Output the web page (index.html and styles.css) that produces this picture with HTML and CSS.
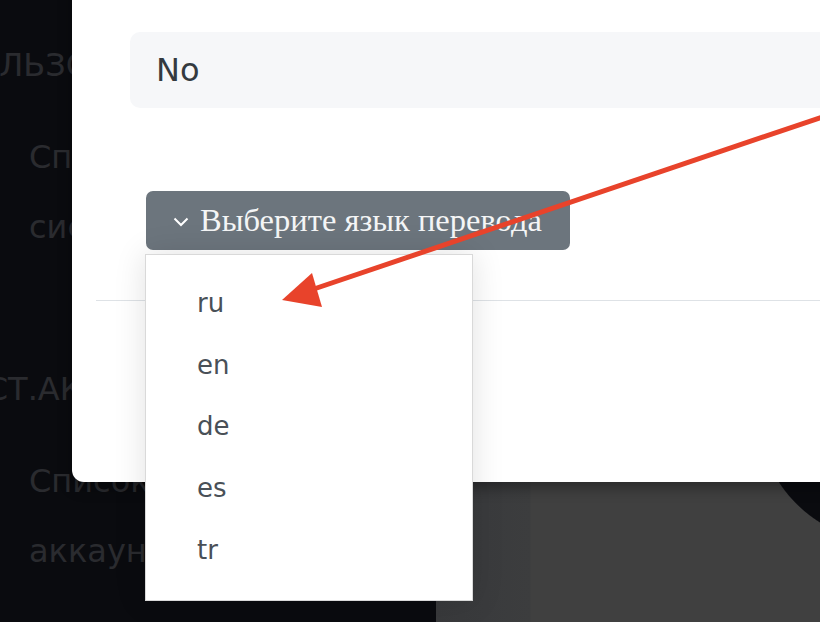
FILE: index.html
```html
<!DOCTYPE html>
<html lang="ru">

<head>
    <meta charset="UTF-8">
    <meta name="viewport" content="width=device-width, initial-scale=1.0">
    <title>Выбор языка перевода</title>
    <link rel="stylesheet" href="styles.css">
</head>

<body>
    <div class="layout">
        <!-- боковое меню под затемнением -->
        <aside class="sidebar">
            <div class="nav-title nav-title-users">Пользователи</div>
            <div class="nav-item">Список пользователей системы</div>
            <div class="nav-title nav-title-test">Тест.аккаунты</div>
            <div class="nav-item">Список тестовых аккаунтов</div>
        </aside>
        <main class="main"></main>
    </div>

    <!-- модальное окно -->
    <div class="modal">
        <div class="modal-body">
            <div class="field">No</div>
            <div class="translate">
                <button class="btn-translate" type="button">
                    <svg class="chevron" width="16" height="10" viewBox="0 0 16 10">
                        <polyline points="1.5,1.5 8,8 14.5,1.5" fill="none" stroke="#fff" stroke-width="2" />
                    </svg>
                    <span>Выберите язык перевода</span>
                </button>
                <ul class="dropdown">
                    <li class="dropdown-item">ru</li>
                    <li class="dropdown-item">en</li>
                    <li class="dropdown-item">de</li>
                    <li class="dropdown-item">es</li>
                    <li class="dropdown-item">tr</li>
                </ul>
            </div>
        </div>
        <div class="modal-footer"></div>
    </div>

    <!-- стрелка-указатель поверх скриншота -->
    <svg class="pointer" width="820" height="622" viewBox="0 0 820 622">
        <line x1="308" y1="291" x2="840" y2="111" stroke="#e8432b" stroke-width="5" />
        <polygon points="282,300 312,273 322,307" fill="#e8432b" />
    </svg>
</body>

</html>
```

FILE: styles.css
```css
* {
    box-sizing: border-box;
}

body {
    margin: 0;
    height: 622px;
    overflow: hidden;
    position: relative;
    background: #0a0b0f;
    font-family: "DejaVu Sans", "Noto Sans", sans-serif;
}

.layout {
    display: flex;
    height: 622px;
}

.sidebar {
    width: 436px;
    flex-shrink: 0;
    padding-top: 30px;
    color: #2a2b2f;
    font-size: 32px;
    overflow: hidden;
}

.nav-title {
    line-height: 70px;
    text-transform: uppercase;
    white-space: nowrap;
}

.nav-title-users {
    margin-left: -50px;
}

.nav-title-test {
    margin-top: 92px;
    margin-left: -54px;
}

.nav-item {
    margin-top: 22px;
    padding-left: 29px;
    line-height: 70px;
}

.main {
    flex: 1;
    background:
        radial-gradient(circle at 454px 410px, #0a0b0f 132px, transparent 133px),
        linear-gradient(to right, #38393b 0, #3a3b3d 50px, #3c3d3e 94px, #404040 95px);
}

.modal {
    position: absolute;
    left: 72px;
    top: -40px;
    width: 800px;
    height: 522px;
    background: #fff;
    border-radius: 12px;
    box-shadow: 0 6px 14px rgba(0, 0, 0, .35);
    padding-left: 24px;
}

.modal-body {
    padding: 72px 0 0 34px;
}

.field {
    height: 76px;
    line-height: 76px;
    padding-left: 26px;
    background: #f6f7f9;
    border-radius: 10px;
    color: #343a40;
    font-size: 32px;
}

.translate {
    position: relative;
    margin: 83px 0 0 16px;
}

.btn-translate {
    display: flex;
    align-items: center;
    gap: 11px;
    width: 424px;
    height: 59px;
    padding: 0 0 0 27px;
    border: 0;
    border-radius: 7px;
    background: #6c757d;
    color: #f4f5f6;
    font-family: "Liberation Serif", serif;
    font-size: 32.5px;
}

.chevron {
    margin-top: 2px;
}

.dropdown {
    position: absolute;
    top: 63px;
    left: -1px;
    width: 328px;
    margin: 0;
    padding: 18px 0;
    list-style: none;
    background: #fff;
    border: 1px solid rgba(0, 0, 0, .15);
    box-shadow: 0 0 30px rgba(0, 0, 0, .12);
    z-index: 2;
}

.dropdown-item {
    padding-left: 51px;
    line-height: 61.7px;
    color: #495057;
    font-size: 26px;
}

.modal-footer {
    margin-top: 50px;
    border-top: 1px solid #dee2e6;
}

.pointer {
    position: absolute;
    left: 0;
    top: 0;
    pointer-events: none;
    z-index: 5;
}
```
